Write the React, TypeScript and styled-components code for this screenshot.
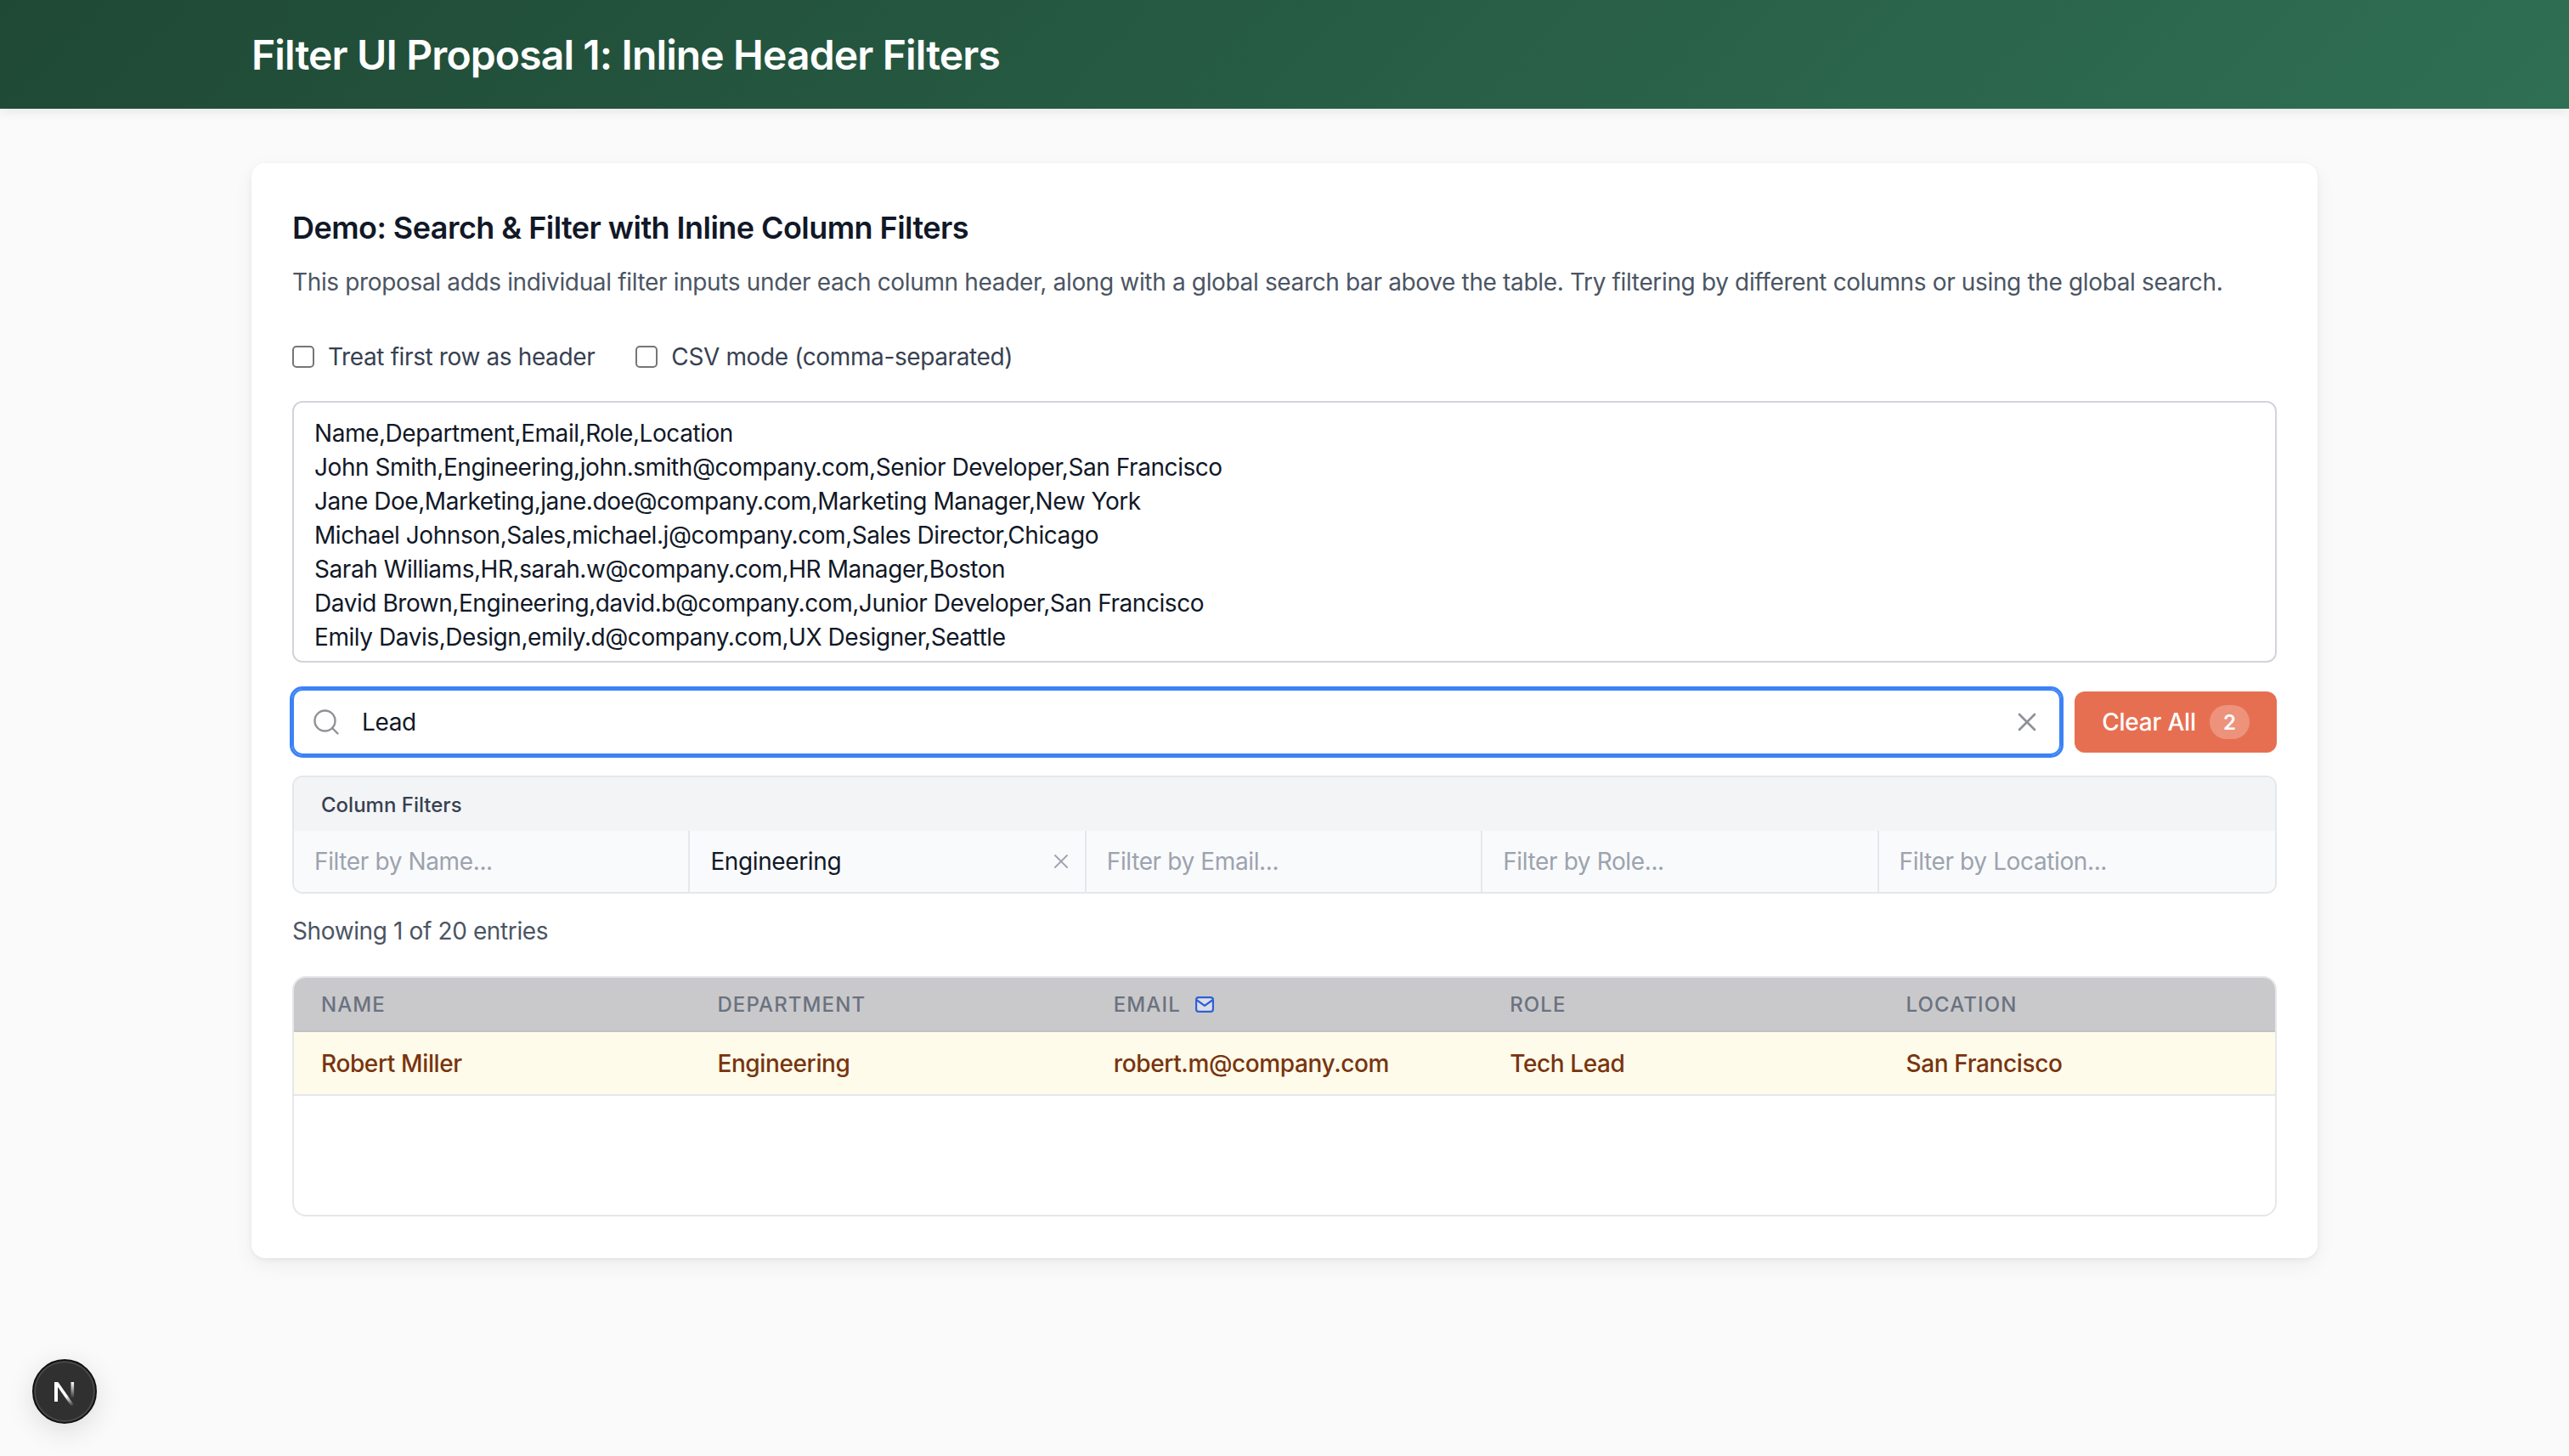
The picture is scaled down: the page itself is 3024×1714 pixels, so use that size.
import React from "react";
import styled, { createGlobalStyle } from "styled-components";
import { Search, X } from "lucide-react";

const GlobalStyle = createGlobalStyle`
  html, body {
    margin: 0;
    padding: 0;
    background: #fafafa;
    font-family: Inter, "Liberation Sans", sans-serif;
    color: #111827;
  }
  * {
    box-sizing: border-box;
  }
`;

const Page = styled.div`
  min-height: 1714px;
  background: #fafafa;
`;

const Header = styled.header`
  height: 128px;
  background: linear-gradient(135deg, #1f4935 0%, #2f6f53 100%);
  box-shadow: 0 4px 12px rgba(0, 0, 0, 0.08);
  display: flex;
  align-items: center;
  justify-content: center;
`;

const HeaderInner = styled.div`
  width: 2432px;
`;

const Title = styled.h1`
  margin: 2px 0 0;
  font-size: 48px;
  line-height: 64px;
  font-weight: 600;
  letter-spacing: -0.86px;
  color: #ffffff;
`;

const Main = styled.main`
  width: 2432px;
  margin: 64px auto 0;
`;

const Card = styled.section`
  background: #ffffff;
  border-radius: 16px;
  box-shadow: 0 2px 6px rgba(0, 0, 0, 0.06), 0 8px 24px rgba(0, 0, 0, 0.05);
  padding: 48px;
  height: 1289px;
`;

const CardTitle = styled.h2`
  margin: 0 0 16px;
  font-size: 36px;
  line-height: 56px;
  font-weight: 600;
  letter-spacing: -0.55px;
  color: #111827;
`;

const CardText = styled.p`
  margin: 0 0 48px;
  font-size: 28px;
  line-height: 40px;
  letter-spacing: -0.35px;
  color: #4b5563;
`;

const OptionRow = styled.div`
  display: flex;
  gap: 48px;
  margin-bottom: 32px;
`;

const OptionLabel = styled.label`
  display: flex;
  align-items: center;
  gap: 16px;
  font-size: 28px;
  line-height: 40px;
  letter-spacing: -0.38px;
  color: #374151;
`;

const CheckBox = styled.span`
  width: 26px;
  height: 26px;
  border: 2px solid #767676;
  border-radius: 5px;
  background: #fff;
`;

const DataInput = styled.textarea`
  display: block;
  width: 100%;
  height: 308px;
  padding: 16px 24px;
  border: 2px solid #d1d5db;
  border-radius: 12px;
  font-family: inherit;
  font-size: 28px;
  line-height: 40px;
  letter-spacing: -0.44px;
  color: #111827;
  resize: none;
  overflow: hidden;
  outline: none;
  margin-bottom: 31px;
`;

const SearchRow = styled.div`
  display: flex;
  align-items: center;
  gap: 16px;
  margin-bottom: 24px;
`;

const SearchBox = styled.div`
  flex: 1;
  height: 78px;
  display: flex;
  align-items: center;
  gap: 24px;
  padding: 0 20px 0 20px;
  border: 2px solid #3b82f6;
  border-radius: 12px;
  box-shadow: 0 0 0 3px #3b82f6;
  color: #8e9196;
`;

const SearchInput = styled.input`
  flex: 1;
  border: none;
  outline: none;
  padding: 0;
  background: transparent;
  font-family: inherit;
  font-size: 28px;
  letter-spacing: -0.38px;
  color: #111827;
`;

const ClearButton = styled.button`
  width: 238px;
  height: 72px;
  display: flex;
  align-items: center;
  justify-content: center;
  gap: 16px;
  border: none;
  border-radius: 12px;
  background: #e76f51;
  color: #fff;
  font-family: inherit;
  font-size: 28px;
  font-weight: 500;
  letter-spacing: -0.2px;
`;

const CountBadge = styled.span`
  width: 47px;
  height: 40px;
  border-radius: 20px;
  background: rgba(255, 255, 255, 0.25);
  display: flex;
  align-items: center;
  justify-content: center;
  font-size: 24px;
  font-weight: 600;
`;

const FilterPanel = styled.div`
  border: 2px solid #e5e7eb;
  border-radius: 12px;
  overflow: hidden;
  margin-bottom: 24px;
`;

const FilterHead = styled.div`
  height: 63px;
  padding: 2px 32px 0;
  display: flex;
  align-items: center;
  background: #f3f4f6;
  font-size: 24px;
  font-weight: 500;
  color: #374151;
`;

const FilterGrid = styled.div`
  display: grid;
  grid-template-columns: repeat(5, 1fr);
  background: #f9fafb;
`;

const FilterCell = styled.div`
  position: relative;
  height: 72px;
  display: flex;
  align-items: center;
  padding: 0 24px;
  font-size: 28px;
  letter-spacing: -0.38px;
  color: ${(p) => (p.$filled ? "#111827" : "#9ca3af")};
  border-right: 2px solid #e5e7eb;

  &:last-child {
    border-right: none;
  }
`;

const CellClear = styled.span`
  position: absolute;
  right: 14px;
  top: 22px;
  display: flex;
  color: #9ca3af;
`;

const EntryCount = styled.div`
  font-size: 28px;
  line-height: 40px;
  letter-spacing: -0.38px;
  color: #4b5563;
  margin-bottom: 33px;
`;

const TableWrap = styled.div`
  height: 283px;
  border: 2px solid #e5e7eb;
  border-radius: 16px;
  overflow: hidden;
`;

const Row = styled.div`
  display: grid;
  grid-template-columns: repeat(5, 1fr);
  align-items: center;
`;

const HeadRow = styled(Row)`
  height: 64px;
  background: #c9c9cb;
  border-bottom: 2px solid #c2c2c4;
`;

const HeadCell = styled.div`
  display: flex;
  align-items: center;
  gap: 17px;
  padding-left: 32px;
  font-size: 24px;
  font-weight: 500;
  letter-spacing: 1.1px;
  text-transform: uppercase;
  color: #6b7280;
`;

const BodyRow = styled(Row)`
  height: 75px;
  background: #fffbeb;
  border-bottom: 2px solid #e5e7eb;
`;

const BodyCell = styled.div`
  padding-left: 32px;
  font-size: 28px;
  font-weight: 500;
  letter-spacing: -0.38px;
  color: #78350f;
`;

const DevBadge = styled.div`
  position: fixed;
  left: 38px;
  top: 1600px;
  width: 76px;
  height: 76px;
  border-radius: 50%;
  background: #303030;
  border: 2px solid #111;
  box-shadow: 0 8px 32px rgba(0, 0, 0, 0.12), inset 0 0 0 2px rgba(255, 255, 255, 0.12);
  display: flex;
  align-items: center;
  justify-content: center;
`;

const columns = ["Name", "Department", "Email", "Role", "Location"];

const csv = `Name,Department,Email,Role,Location
John Smith,Engineering,john.smith@company.com,Senior Developer,San Francisco
Jane Doe,Marketing,jane.doe@company.com,Marketing Manager,New York
Michael Johnson,Sales,michael.j@company.com,Sales Director,Chicago
Sarah Williams,HR,sarah.w@company.com,HR Manager,Boston
David Brown,Engineering,david.b@company.com,Junior Developer,San Francisco
Emily Davis,Design,emily.d@company.com,UX Designer,Seattle`;

const result = ["Robert Miller", "Engineering", "robert.m@company.com", "Tech Lead", "San Francisco"];

function MailIcon() {
  return (
    <svg width="22" height="19" viewBox="0 0 22 19" fill="none">
      <rect x="1.1" y="1.1" width="19.8" height="16.8" rx="3" stroke="#2f5fd8" strokeWidth="2.2" fill="#dcdfe6" />
      <path d="M2 4.5 L11 11 L20 4.5" stroke="#2f5fd8" strokeWidth="2.2" fill="none" />
    </svg>
  );
}

function NextLogo() {
  return (
    <svg width="24" height="28" viewBox="0 0 24 28" fill="none" style={{ marginTop: 5 }}>
      <defs>
        <linearGradient id="nDiag" x1="4" y1="2" x2="22" y2="28" gradientUnits="userSpaceOnUse">
          <stop offset="0.55" stopColor="#fff" />
          <stop offset="1" stopColor="#fff" stopOpacity="0" />
        </linearGradient>
        <linearGradient id="nRight" x1="21" y1="0" x2="21" y2="19" gradientUnits="userSpaceOnUse">
          <stop stopColor="#fff" />
          <stop offset="1" stopColor="#fff" stopOpacity="0" />
        </linearGradient>
      </defs>
      <rect x="0" y="0" width="4" height="23" fill="#fff" />
      <path d="M0 0 H4.4 L24 28 H19.6 Z" fill="url(#nDiag)" />
      <rect x="19.5" y="0" width="3.6" height="19" fill="url(#nRight)" />
    </svg>
  );
}

export default function App() {
  return (
    <Page>
      <GlobalStyle />
      <Header>
        <HeaderInner>
          <Title>Filter UI Proposal 1: Inline Header Filters</Title>
        </HeaderInner>
      </Header>
      <Main>
        <Card>
          <CardTitle>Demo: Search &amp; Filter with Inline Column Filters</CardTitle>
          <CardText>
            This proposal adds individual filter inputs under each column header, along with a global search bar above the table. Try filtering by different columns or using the global search.
          </CardText>
          <OptionRow>
            <OptionLabel>
              <CheckBox />
              Treat first row as header
            </OptionLabel>
            <OptionLabel>
              <CheckBox />
              CSV mode (comma-separated)
            </OptionLabel>
          </OptionRow>
          <DataInput readOnly value={csv} />
          <SearchRow>
            <SearchBox>
              <Search size={36} strokeWidth={1.6} />
              <SearchInput readOnly value="Lead" />
              <X size={36} strokeWidth={1.8} />
            </SearchBox>
            <ClearButton>
              Clear All
              <CountBadge>2</CountBadge>
            </ClearButton>
          </SearchRow>
          <FilterPanel>
            <FilterHead>Column Filters</FilterHead>
            <FilterGrid>
              {columns.map((c) =>
                c === "Department" ? (
                  <FilterCell key={c} $filled>
                    Engineering
                    <CellClear>
                      <X size={28} strokeWidth={1.6} />
                    </CellClear>
                  </FilterCell>
                ) : (
                  <FilterCell key={c}>Filter by {c}...</FilterCell>
                )
              )}
            </FilterGrid>
          </FilterPanel>
          <EntryCount>Showing 1 of 20 entries</EntryCount>
          <TableWrap>
            <HeadRow>
              {columns.map((c) => (
                <HeadCell key={c}>
                  {c}
                  {c === "Email" && <MailIcon />}
                </HeadCell>
              ))}
            </HeadRow>
            <BodyRow>
              {result.map((v) => (
                <BodyCell key={v}>{v}</BodyCell>
              ))}
            </BodyRow>
          </TableWrap>
        </Card>
      </Main>
      <DevBadge>
        <NextLogo />
      </DevBadge>
    </Page>
  );
}
